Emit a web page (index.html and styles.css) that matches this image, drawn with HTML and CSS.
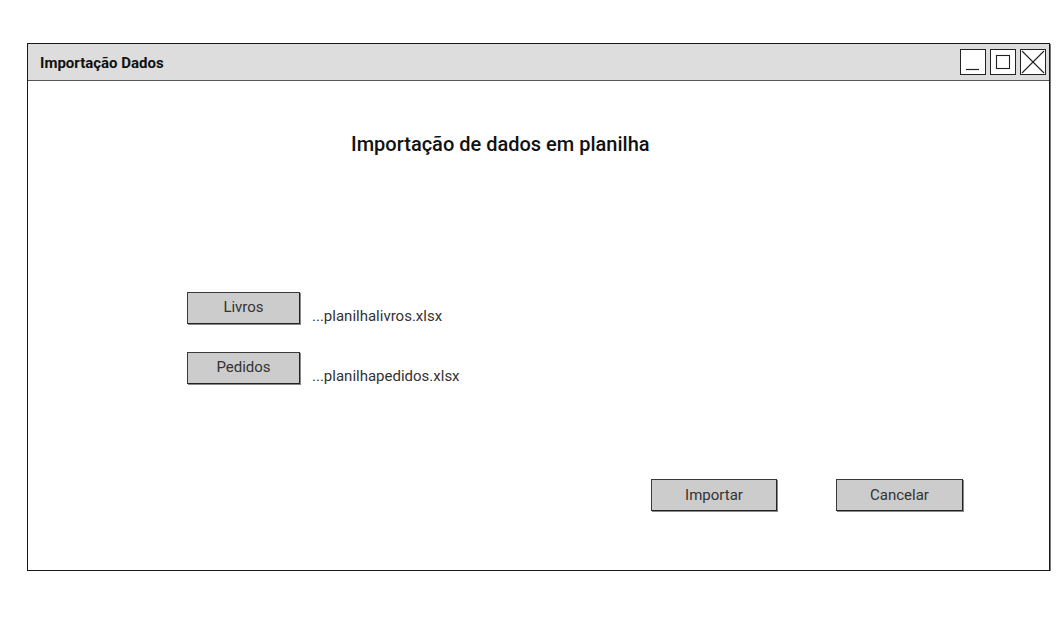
FILE: index.html
```html
<!DOCTYPE html>
<html lang="pt">
<head>
<meta charset="utf-8">
<title>Importação Dados</title>
<link rel="stylesheet" href="styles.css">
</head>
<body>
<div class="window">
  <div class="titlebar">
    <span class="wtitle">Importação Dados</span>
    <div class="controls">
      <span class="ctl">
        <svg width="24" height="24" viewBox="0 0 24 24"><line x1="5" y1="19.5" x2="18" y2="19.5" stroke="#222" stroke-width="1.2"/></svg>
      </span>
      <span class="ctl">
        <svg width="24" height="24" viewBox="0 0 24 24"><rect x="5.5" y="5.5" width="13" height="13" fill="none" stroke="#222" stroke-width="1.1"/></svg>
      </span>
      <span class="ctl">
        <svg width="24" height="24" viewBox="0 0 24 24"><line x1="1" y1="1" x2="23" y2="23" stroke="#222" stroke-width="1.1"/><line x1="23" y1="1" x2="1" y2="23" stroke="#222" stroke-width="1.1"/></svg>
      </span>
    </div>
  </div>
  <div class="content">
    <h1 class="heading">Importação de dados em planilha</h1>
    <div class="files">
      <div class="file-row">
        <button class="btn btn-file">Livros</button>
        <span class="fname">...planilhalivros.xlsx</span>
      </div>
      <div class="file-row">
        <button class="btn btn-file">Pedidos</button>
        <span class="fname">...planilhapedidos.xlsx</span>
      </div>
    </div>
    <div class="actions">
      <button class="btn btn-import">Importar</button>
      <button class="btn btn-cancel">Cancelar</button>
    </div>
  </div>
</div>
</body>
</html>
```

FILE: styles.css
```css
html, body {
  margin: 0;
  padding: 0;
  background: #fff;
}
body {
  font-family: Roboto, "Liberation Sans", sans-serif;
  color: #333;
}
.window {
  margin: 43px 0 0 27px;
  width: 1021px;
  height: 526px;
  border: 1px solid #1a1a1a;
  box-shadow: 1px 1px 0 #777;
  display: flex;
  flex-direction: column;
  background: #fff;
}
.titlebar {
  height: 37px;
  background: #dddddd;
  border-bottom: 1px solid #555;
  display: flex;
  align-items: flex-start;
  justify-content: space-between;
  box-sizing: border-box;
}
.wtitle {
  font-size: 15px;
  font-weight: 700;
  color: #111;
  margin: 10px 0 0 12px;
  line-height: 18px;
}
.controls {
  display: flex;
  gap: 4px;
  margin: 5px 3px 0 0;
}
.ctl {
  width: 24px;
  height: 24px;
  border: 1px solid #222;
  background: #fff;
  display: block;
}
.ctl svg {
  display: block;
}
.content {
  display: flex;
  flex-direction: column;
}
.heading {
  margin: 51px 0 0 323px;
  font-size: 20px;
  font-weight: 500;
  line-height: 24px;
  color: #111;
}
.files {
  margin: 136px 0 0 159px;
  display: flex;
  flex-direction: column;
  gap: 26px;
}
.file-row {
  display: flex;
  align-items: flex-start;
  gap: 12px;
}
.btn {
  font-family: Roboto, "Liberation Sans", sans-serif;
  font-size: 15px;
  color: #333;
  background: #cccccc;
  border: 1px solid #3a3a3a;
  border-right-color: #222;
  border-bottom: 1px solid #222;
  box-shadow: 1px 1px 0 #888;
  height: 32px;
  padding: 0;
  line-height: 30px;
  margin: 0;
  box-sizing: border-box;
}
.btn-file {
  width: 113px;
  line-height: 28px;
  padding-bottom: 2px;
}
.fname {
  font-size: 15px;
  line-height: 20px;
  padding-top: 14px;
  color: #333;
}
.actions {
  margin: 93px 0 0 623px;
  display: flex;
  gap: 59px;
}
.btn-import {
  width: 126px;
}
.btn-cancel {
  width: 127px;
}
```
